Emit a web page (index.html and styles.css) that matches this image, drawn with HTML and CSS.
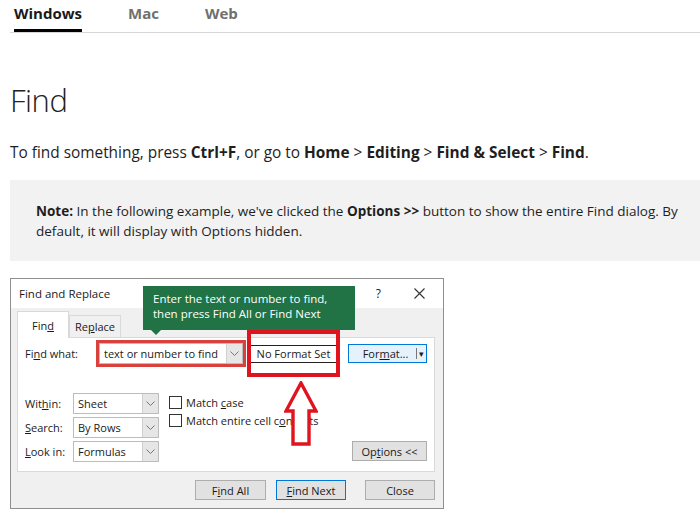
FILE: index.html
```html
<!DOCTYPE html>
<html lang="en">
<head>
  <meta charset="UTF-8">
  <title>Find</title>
  <link rel="stylesheet" href="styles.css">
</head>
<body>
  <div class="page">
    <nav class="os-tabs">
      <a href="#" class="os-tab on">Windows</a>
      <a href="#" class="os-tab">Mac</a>
      <a href="#" class="os-tab">Web</a>
    </nav>

    <h1 class="title">Find</h1>
    <p class="lead">To find something, press <b>Ctrl+F</b>, or go to <b>Home</b> &gt; <b>Editing</b> &gt; <b>Find &amp; Select</b> &gt; <b>Find</b>.</p>

    <div class="note">
      <p><b>Note:</b> In the following example, we've clicked the <b>Options &gt;&gt;</b> button to show the entire Find dialog. By default, it will display with Options hidden.</p>
    </div>

    <!-- 찾기 대화상자 그림 -->
    <div class="dlg">
      <div class="dlg-head">
        <span class="dlg-name">Find and Replace</span>
        <span class="dlg-help">?</span>
        <svg class="dlg-x" width="11" height="11" viewBox="0 0 11 11"><path d="M0.5 0.5 L10.5 10.5 M10.5 0.5 L0.5 10.5" stroke="#333" stroke-width="1.1" fill="none"/></svg>
      </div>
      <div class="dlg-body">
        <div class="dtabs">
          <span class="dtab on">Fin<u>d</u></span>
          <span class="dtab">Re<u>p</u>lace</span>
        </div>
        <div class="panel">
          <div class="row-find">
            <span class="lbl-find">Fi<u>n</u>d what:</span>
            <div class="combo">
              <span class="val">text or number to find</span>
              <span class="drop"><svg width="9" height="5" viewBox="0 0 9 5"><path d="M0.5 0.5 L4.5 4.5 L8.5 0.5" stroke="#777" fill="none"/></svg></span>
            </div>
            <div class="fmt-set">No Format Set</div>
            <div class="fmt-btn">
              <span class="fmt-txt">For<u>m</u>at...</span>
              <span class="fmt-split">&#9662;</span>
            </div>
          </div>

          <div class="row-opts">
            <div class="sel-grid">
              <span class="lbl">Wit<u>h</u>in:</span>
              <div class="sel"><span class="val">Sheet</span><span class="drop"><svg width="9" height="5" viewBox="0 0 9 5"><path d="M0.5 0.5 L4.5 4.5 L8.5 0.5" stroke="#777" fill="none"/></svg></span></div>
              <span class="lbl"><u>S</u>earch:</span>
              <div class="sel"><span class="val">By Rows</span><span class="drop"><svg width="9" height="5" viewBox="0 0 9 5"><path d="M0.5 0.5 L4.5 4.5 L8.5 0.5" stroke="#777" fill="none"/></svg></span></div>
              <span class="lbl"><u>L</u>ook in:</span>
              <div class="sel"><span class="val">Formulas</span><span class="drop"><svg width="9" height="5" viewBox="0 0 9 5"><path d="M0.5 0.5 L4.5 4.5 L8.5 0.5" stroke="#777" fill="none"/></svg></span></div>
            </div>
            <ul class="checks">
              <li><span class="box"></span><span>Match <u>c</u>ase</span></li>
              <li><span class="box"></span><span>Match entire cell c<u>o</u>ntents</span></li>
            </ul>
            <span class="btn opt-btn"><span>Op<u>t</u>ions &lt;&lt;</span></span>
          </div>
        </div>
        <div class="dlg-foot">
          <span class="btn"><span>F<u>i</u>nd All</span></span>
          <span class="btn def"><span><u>F</u>ind Next</span></span>
          <span class="btn close">Close</span>
        </div>
      </div>

      <!-- 위에 덧그린 설명 -->
      <div class="tip">Enter the text or number to find,<br>then press Find All or Find Next</div>
      <div class="red-box"></div>
      <svg class="red-arrow" width="34" height="66" viewBox="0 0 34 66">
        <polygon points="17,2 32,30 25,30 25,63 9,63 9,30 2,30" fill="#fff" stroke="#e0141e" stroke-width="3.4"/>
      </svg>
    </div>
  </div>
</body>
</html>
```

FILE: styles.css
```css
/* 초기화 */
* {
  margin: 0;
  padding: 0;
  box-sizing: border-box;
}
ul, li {
  list-style-type: none;
}
a {
  text-decoration: none;
}
body {
  background-color: #fff;
  font-family: "Open Sans", "Noto Sans", sans-serif;
  color: #1e1e1e;
}
.page {
  padding-left: 10px;
}

/* 상단 탭 */
.os-tabs {
  display: flex;
  gap: 46px;
  height: 33px;
  padding-left: 4px;
  border-bottom: 1px solid #d6d6d6;
}
.os-tab {
  height: 32px;
  padding-top: 3px;
  font-size: 15px;
  font-weight: 700;
  color: #707070;
}
.os-tab.on {
  color: #1a1a1a;
  border-bottom: 3px solid #000;
}

/* 본문 */
.title {
  margin-top: 47px;
  font-size: 31px;
  font-weight: 300;
  line-height: 40px;
  letter-spacing: -0.5px;
  color: #222;
}
.lead {
  margin-top: 21px;
  font-size: 15.4px;
  line-height: 24px;
}
.lead b, .note b {
  font-weight: 700;
}
.note {
  margin-top: 15px;
  padding: 21px 20px 20px 26px;
  background-color: #f2f2f2;
  font-size: 13.5px;
  line-height: 20px;
}

/* 대화상자 */
.dlg {
  position: relative;   /* 위에 덧그린 것들 기준 */
  width: 434px;
  height: 231px;
  margin-top: 17px;
  border: 1px solid #8f8f8f;
  font-size: 11px;
  color: #1a1a1a;
}
.dlg u {
  text-decoration: underline;
  text-underline-offset: 1px;
}
.dlg-head {
  display: flex;
  align-items: center;
  height: 29px;
  padding: 0 18px 0 8px;
  background-color: #fff;
}
.dlg-name {
  flex: 1;
  font-size: 11.5px;
}
.dlg-help {
  margin-right: 33px;
  font-size: 12px;
}
.dlg-body {
  height: 200px;
  padding: 3px 8px 0 6px;
  background-color: #f0f0f0;
}
.dtabs {
  display: flex;
  align-items: flex-end;
  height: 26px;
}
.dtab {
  width: 52px;
  height: 22px;
  padding-top: 3px;
  text-align: center;
  border: 1px solid #d9d9d9;
  border-bottom: 0;
  background-color: #f0f0f0;
}
.dtab.on {
  height: 27px;
  padding-top: 6px;
  margin-bottom: -1px;
  background-color: #fff;
  position: relative;
  z-index: 1;
}
.panel {
  height: 135px;
  padding: 5px 0 0 7px;
  border: 1px solid #d9d9d9;
  background-color: #fff;
}
.row-find {
  display: flex;
  align-items: center;
  height: 21px;
}
.lbl-find {
  width: 74px;
}
.combo, .sel {
  display: flex;
  align-items: center;
  border: 1px solid #bcbcbc;
  background-color: #fff;
}
.combo {
  width: 144px;
  height: 21px;
  outline: 3px solid #d9413c;   /* 빨간 강조 테두리 */
}
.val {
  flex: 1;
  padding-left: 4px;
  white-space: nowrap;
}
.drop {
  display: flex;
  align-items: center;
  justify-content: center;
  width: 16px;
  height: 100%;
  background-color: #e6e6e6;
  border-left: 1px solid #d0d0d0;
}
.fmt-set {
  width: 85px;
  height: 18px;
  margin-left: 8px;
  line-height: 16px;
  text-align: center;
  border-top: 1px solid #222;
  border-bottom: 1px solid #222;
}
.fmt-btn {
  display: flex;
  align-items: center;
  width: 79px;
  height: 19px;
  margin-left: 12px;
  border: 1px solid #0078d7;
  background-color: #e5f1fb;
}
.fmt-txt {
  flex: 1;
  padding-left: 6px;
  text-align: center;
}
.fmt-split {
  width: 10px;
  height: 11px;
  border-left: 1px solid #777;
  font-size: 9px;
  line-height: 11px;
  text-align: right;
  padding-right: 2px;
}

.row-opts {
  display: flex;
  align-items: flex-start;
  margin-top: 29px;
}
.sel-grid {
  display: grid;
  grid-template-columns: 48px 86px;
  grid-auto-rows: 21px;
  row-gap: 3px;
  align-items: center;
}
.sel {
  height: 21px;
}
.checks {
  margin: 3px 0 0 10px;
  display: flex;
  flex-direction: column;
  gap: 5px;
}
.checks li {
  display: flex;
  align-items: center;
  height: 13px;
}
.box {
  width: 13px;
  height: 13px;
  margin-right: 4px;
  border: 1px solid #333;
  background-color: #fff;
}
.btn {
  display: flex;
  align-items: center;
  justify-content: center;
  width: 70px;
  height: 20px;
  border: 1px solid #adadad;
  background-color: #e1e1e1;
}
.opt-btn {
  width: 75px;
  margin: 48px 7px 0 auto;
}
.dlg-foot {
  display: flex;
  justify-content: flex-end;
  gap: 10px;
  margin-top: 8px;
}
.dlg-foot .btn:first-child {
  width: 71px;
}
.btn.def {
  border-color: #0078d7;
}
.btn.close {
  margin-left: 9px;
}

/* 덧그린 말풍선, 빨간 상자, 화살표 */
.tip {
  position: absolute;
  left: 132px;
  top: 7px;
  width: 212px;
  height: 44px;
  padding: 5px 0 0 10px;
  background-color: #217346;
  color: #fff;
  font-size: 11.5px;
  line-height: 15px;
}
.tip::after {           /* 말풍선 꼬리 */
  content: '';
  position: absolute;
  left: 8px;
  top: 44px;
  border-left: 5px solid transparent;
  border-right: 5px solid transparent;
  border-top: 5px solid #217346;
}
.red-box {
  position: absolute;
  left: 236px;
  top: 51px;
  width: 93px;
  height: 47px;
  border: 4px solid #e0141e;
}
.red-arrow {
  position: absolute;
  left: 273px;
  top: 102px;
}
```
